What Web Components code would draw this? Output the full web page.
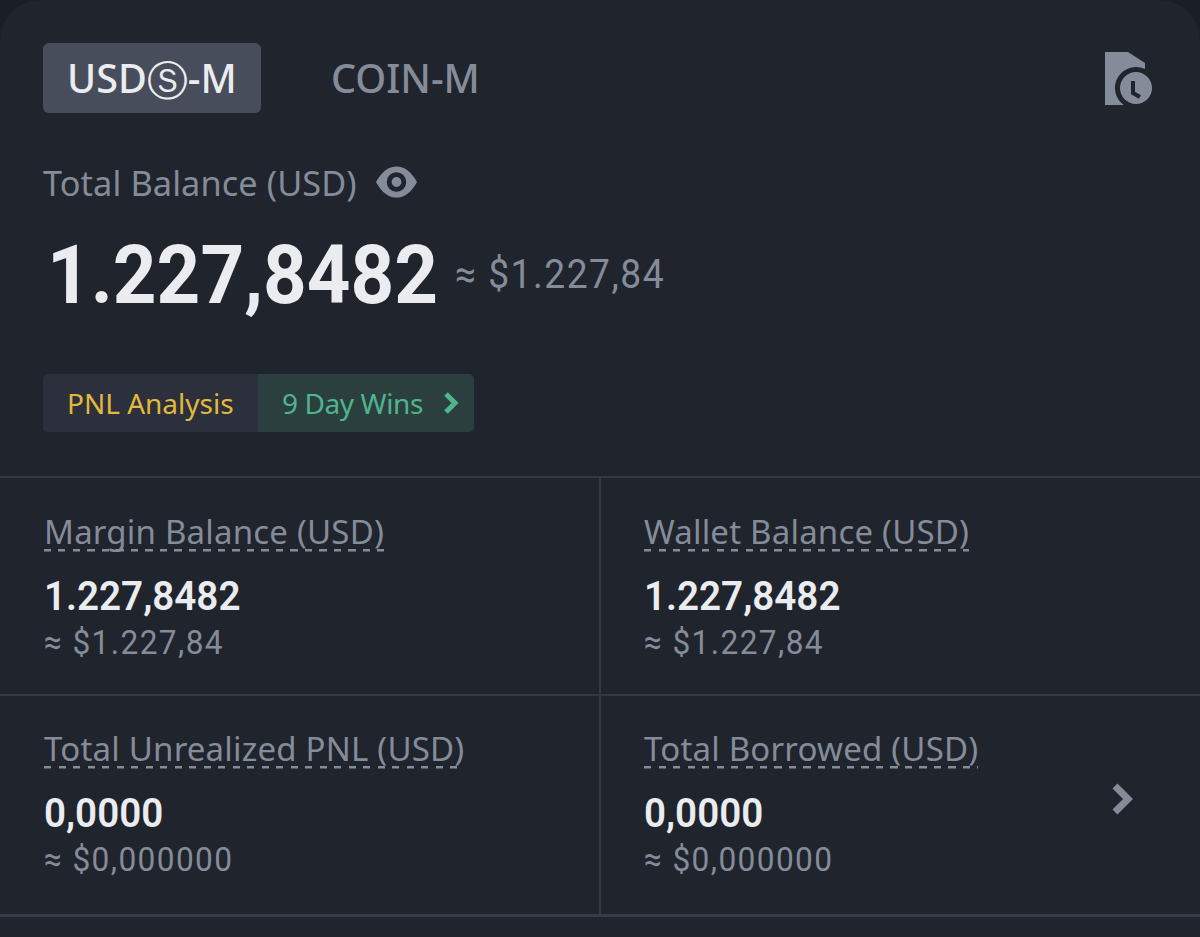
<!DOCTYPE html>
<html>
<head>
<meta charset="utf-8">
<style>
  html, body { margin: 0; background: #1a1e25; }
  body { width: 1200px; height: 937px; overflow: hidden; font-family: "Noto Sans", sans-serif; }
</style>
</head>
<body>
<futures-panel>
  <market-tabs slot="tabs">
    <span class="active">USD<i style="font:400 41px/1 'DejaVu Sans',sans-serif;vertical-align:-2px">Ⓢ</i>-M</span>
    <span>COIN-M</span>
  </market-tabs>
  <balance-head slot="head" amount="1.227,8482" approx="≈ $1.227,84">Total Balance (USD)</balance-head>
  <pnl-strip slot="pnl"></pnl-strip>
  <stat-cell slot="stats" amount="1.227,8482" approx="≈ $1.227,84">Margin Balance (USD)</stat-cell>
  <stat-cell slot="stats" amount="1.227,8482" approx="≈ $1.227,84">Wallet Balance (USD)</stat-cell>
  <stat-cell slot="stats" amount="0,0000" approx="≈ $0,000000">Total Unrealized PNL (USD)</stat-cell>
  <stat-cell slot="stats" amount="0,0000" approx="≈ $0,000000" arrow>Total Borrowed (USD)</stat-cell>
</futures-panel>

<script>
const numFont = `Roboto, "Liberation Sans", sans-serif`;
const textFont = `"Noto Sans", "Open Sans", sans-serif`;

class FuturesPanel extends HTMLElement {
  constructor() {
    super();
    this.attachShadow({ mode: "open" }).innerHTML = `
      <style>
        :host { display: block; height: 937px; background: #20242d; border-radius: 40px 40px 0 0; }
        .top { padding: 43px 47px 0 43px; }
        .grid { display: grid; grid-template-columns: 601px 599px; grid-auto-rows: 218px; margin-top: 44px;
                border-top: 2px solid #333843; border-bottom: 3px solid #363b47; width: 1200px; }
      </style>
      <div class="top">
        <slot name="tabs"></slot>
        <slot name="head"></slot>
        <slot name="pnl"></slot>
      </div>
      <div class="grid"><slot name="stats"></slot></div>`;
  }
}

class MarketTabs extends HTMLElement {
  constructor() {
    super();
    this.attachShadow({ mode: "open" }).innerHTML = `
      <style>
        :host { display: flex; align-items: center; gap: 70px; height: 70px; font: 500 39.5px ${textFont}; color: #858c99; }
        ::slotted(span) { display: block; }
        ::slotted(.active) { background: #474d5a; color: #eaecef; width: 218px; box-sizing: border-box; padding-left: 24px; border-radius: 6px; line-height: 70px; white-space: nowrap; }
        svg { margin-left: auto; width: 50px; height: 54px; margin-top: 2px; }
      </style>
      <slot></slot>
      <svg viewBox="0 0 50 54">
        <path fill="#858c99" d="M2 0H25L42 11V17A21 21 0 0 0 20.7 53H2Z"/>
        <circle cx="33" cy="36" r="16" fill="#858c99"/>
        <path d="M30 29V41L37 45" fill="none" stroke="#20242d" stroke-width="4"/>
      </svg>`;
  }
}

class BalanceHead extends HTMLElement {
  constructor() {
    super();
    const amount = this.getAttribute("amount");
    const approx = this.getAttribute("approx");
    this.attachShadow({ mode: "open" }).innerHTML = `
      <style>
        :host { display: block; }
        .label { display: flex; align-items: center; gap: 19px; margin-top: 47px; height: 44px; font: 400 34.3px ${textFont}; letter-spacing: .1px; color: #858c99; }
        svg { width: 41px; height: 32px; }
        .value { display: flex; align-items: baseline; gap: 17px; margin: 21px 0 0 4px; height: 100px; line-height: 100px; font-family: ${numFont}; }
        /* no DIN here, so Roboto gets squeezed to the same widths */
        b { font-size: 82px; font-weight: 700; color: #eaecef; transform: scaleX(.93); transform-origin: left; margin-right: -29px; }
        span { font-size: 40px; color: #858c99; letter-spacing: 1.6px; position: relative; top: -15px; transform: scaleX(.93); transform-origin: left; }
      </style>
      <div class="label"><slot></slot>
        <svg viewBox="0 0 42 32"><path fill="#858c99" fill-rule="evenodd" d="M0 16C6 5 13 0 21 0s15 5 21 16C36 27 29 32 21 32S6 27 0 16Zm21-10a10 10 0 1 0 0 20 10 10 0 0 0 0-20Zm0 5a5 5 0 1 1 0 10 5 5 0 0 1 0-10Z"/></svg>
      </div>
      <div class="value"><b>${amount}</b><span>${approx}</span></div>`;
  }
}

class PnlStrip extends HTMLElement {
  constructor() {
    super();
    this.attachShadow({ mode: "open" }).innerHTML = `
      <style>
        :host { display: inline-flex; height: 58px; margin-top: 49px; font: 400 28px ${textFont}; border-radius: 5px; overflow: hidden; vertical-align: top; }
        div { display: flex; align-items: center; }
        .a { width: 215px; padding-left: 24px; box-sizing: border-box; background: #2b303c; color: #e2b93c; }
        .b { width: 216px; padding-left: 24px; box-sizing: border-box; background: #2b403e; color: #50b48c; gap: 20px; letter-spacing: -.4px; }
        svg { width: 17px; height: 22px; }
      </style>
      <div class="a">PNL Analysis</div>
      <div class="b">9 Day Wins
        <svg viewBox="0 0 17 22"><path d="M3 2l9 9-9 9" fill="none" stroke="#50b48c" stroke-width="5"/></svg>
      </div>`;
  }
}

class StatCell extends HTMLElement {
  constructor() {
    super();
    const arrow = this.hasAttribute("arrow") ? `<svg viewBox="0 0 22 32"><path d="M3 3l13 13L3 29" fill="none" stroke="#858c99" stroke-width="7"/></svg>` : "";
    this.attachShadow({ mode: "open" }).innerHTML = `
      <style>
        :host { display: block; position: relative; box-sizing: border-box; padding: 34px 0 0 43px; border-bottom: 2px solid #333843; }
        :host(:nth-of-type(odd)) { border-right: 2px solid #333843; padding-left: 44px; }
        :host(:nth-last-of-type(-n+2)) { border-bottom: 0; padding-top: 33px; }
        .label { font: 400 33px/40px ${textFont}; letter-spacing: .2px; color: #858c99; height: 40px; }
        .label span { background: repeating-linear-gradient(90deg, #858c99 0 7px, transparent 7px 14.5px) left 0 bottom 3px / 100% 2.5px no-repeat; }
        .amt { font: 600 40px/46px ${numFont}; color: #eaecef; margin-top: 22px; transform: scaleX(.965); transform-origin: left; }
        .apx { font: 400 34px/46px ${numFont}; color: #858c99; margin-top: -1px; letter-spacing: 1.5px; transform: scaleX(.93); transform-origin: left; }
        svg { position: absolute; right: 66px; top: 87px; width: 22px; height: 32px; }
      </style>
      <div class="label"><span><slot></slot></span></div>
      <div class="amt">${this.getAttribute("amount")}</div>
      <div class="apx">${this.getAttribute("approx")}</div>
      ${arrow}`;
  }
}

customElements.define("market-tabs", MarketTabs);
customElements.define("balance-head", BalanceHead);
customElements.define("pnl-strip", PnlStrip);
customElements.define("stat-cell", StatCell);
customElements.define("futures-panel", FuturesPanel);
</script>
</body>
</html>
